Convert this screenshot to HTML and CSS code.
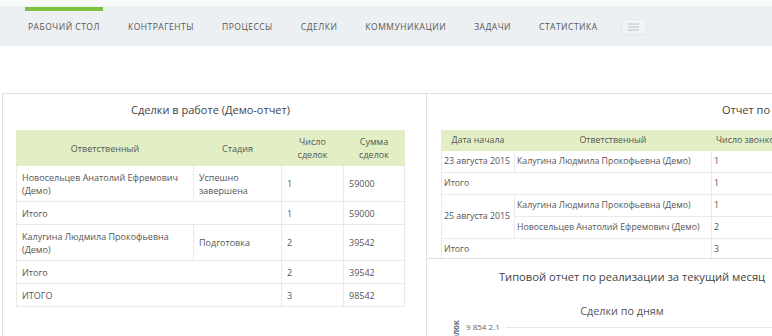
FILE: index.html
```html
<!DOCTYPE html>
<html lang="ru">
<head>
    <meta charset="UTF-8">
    <title>Рабочий стол</title>
    <link rel="stylesheet" href="styles.css">
</head>
<body>

<div class="topline"></div>
<nav class="nav">
    <a href="#" class="nav-item active">Рабочий стол</a>
    <a href="#" class="nav-item">Контрагенты</a>
    <a href="#" class="nav-item">Процессы</a>
    <a href="#" class="nav-item">Сделки</a>
    <a href="#" class="nav-item">Коммуникации</a>
    <a href="#" class="nav-item">Задачи</a>
    <a href="#" class="nav-item">Статистика</a>
    <button class="nav-more">
        <svg width="11" height="8" viewBox="0 0 11 8"><path d="M0 1h11M0 4h11M0 7h11" stroke="#b7bfc6" stroke-width="1.2"/></svg>
    </button>
</nav>

<div class="board">
    <section class="panel panel-deals">
        <h3 class="panel-title">Сделки в работе (Демо-отчет)</h3>
        <table class="report">
            <colgroup>
                <col style="width:177px"><col style="width:88px"><col style="width:62px"><col>
            </colgroup>
            <tr>
                <th>Ответственный</th>
                <th>Стадия</th>
                <th>Число<br>сделок</th>
                <th>Сумма<br>сделок</th>
            </tr>
            <tr class="tall">
                <td>Новосельцев Анатолий Ефремович (Демо)</td>
                <td>Успешно завершена</td>
                <td>1</td>
                <td>59000</td>
            </tr>
            <tr>
                <td colspan="2">Итого</td>
                <td>1</td>
                <td>59000</td>
            </tr>
            <tr class="tall">
                <td>Калугина Людмила Прокофьевна (Демо)</td>
                <td>Подготовка</td>
                <td>2</td>
                <td>39542</td>
            </tr>
            <tr>
                <td colspan="2">Итого</td>
                <td>2</td>
                <td>39542</td>
            </tr>
            <tr>
                <td colspan="2">ИТОГО</td>
                <td>3</td>
                <td>98542</td>
            </tr>
        </table>
    </section>

    <div class="side">
        <section class="panel panel-calls">
            <h3 class="panel-title">Отчет по звонкам (Демо-отчет)</h3>
            <table class="report compact">
                <colgroup>
                    <col style="width:73px"><col style="width:197px"><col style="width:90px">
                </colgroup>
                <tr>
                    <th>Дата начала</th>
                    <th>Ответственный</th>
                    <th class="left">Число звонков</th>
                </tr>
                <tr>
                    <td>23 августа 2015</td>
                    <td>Калугина Людмила Прокофьевна (Демо)</td>
                    <td>1</td>
                </tr>
                <tr>
                    <td colspan="2">Итого</td>
                    <td>1</td>
                </tr>
                <tr>
                    <td rowspan="2">25 августа 2015</td>
                    <td>Калугина Людмила Прокофьевна (Демо)</td>
                    <td>1</td>
                </tr>
                <tr>
                    <td>Новосельцев Анатолий Ефремович (Демо)</td>
                    <td>2</td>
                </tr>
                <tr>
                    <td colspan="2">Итого</td>
                    <td>3</td>
                </tr>
            </table>
        </section>

        <section class="panel panel-sales">
            <h3 class="panel-title">Типовой отчет по реализации за текущий месяц</h3>
            <div class="chart">
                <div class="chart-title">Сделки по дням</div>
                <div class="chart-axis">
                    <span class="axis-name">Сумма сделок</span>
                    <span class="axis-value">9 854 2.1</span>
                    <span class="axis-line"></span>
                </div>
            </div>
        </section>
    </div>
</div>

</body>
</html>
```

FILE: styles.css
```css
html, body {
    margin: 0;
    height: 100%;
    overflow: hidden;
}
body {
    font-family: "Open Sans", Arial, sans-serif;
    background: #fff;
    color: #555;
}
.topline {
    height: 6px;
    background: #f8f9f9;
}
.nav {
    height: 40px;
    background: #edf0f2;
    display: flex;
    align-items: center;
    gap: 22px;
    padding-left: 25px;
}
.nav-item {
    position: relative;
    padding: 0 3px;
    height: 40px;
    line-height: 42px;
    font-size: 8.5px;
    letter-spacing: 0.5px;
    text-transform: uppercase;
    color: #555;
    text-decoration: none;
}
.nav-item.active::before {
    content: "";
    position: absolute;
    top: 1px;
    left: 0;
    right: 0;
    height: 4px;
    background: #7fc241;
}
.nav-more {
    width: 26px;
    height: 16px;
    margin-left: -2px;
    margin-top: 2px;
    padding: 0;
    border: 1px solid #e6e9eb;
    border-radius: 3px;
    background: #f1f3f4;
    display: flex;
    align-items: center;
    justify-content: center;
}
.board {
    margin-top: 47px;
    display: grid;
    grid-template-columns: 425px 1fr;
    margin-left: 2px;
}
.panel {
    border: 1px solid #e0e0e0;
    background: #fff;
    overflow: hidden;
}
.panel-title {
    margin: 0;
    font-weight: normal;
    font-size: 11px;
    color: #444;
    text-align: center;
    line-height: 16px;
    padding: 8px 0 12px;
}
.panel-deals {
    height: 400px;
    padding: 0 21px 0 13px;
}
.side {
    display: flex;
    flex-direction: column;
    width: 758px;
}
.panel-calls {
    height: 164px;
    padding: 0 14px;
    border-left: none;
}
.panel-sales {
    width: 410px;
    height: 200px;
    border-top: 1px solid #e0e0e0;
    margin-top: -1px;
    border-left: none;
}
.panel-sales .panel-title {
    padding-top: 10px;
    font-size: 11.2px;
}
.report {
    border-collapse: collapse;
    table-layout: fixed;
    width: 389px;
    font-size: 9px;
    color: #555;
}
.report th {
    background: #e2efc5;
    font-weight: normal;
    text-align: center;
    line-height: 13px;
    height: 34px;
    padding: 0 4px;
    border: 1px solid #e2efc5;
}
.report td {
    border: 1px solid #eaeaea;
    padding: 0 5px;
    height: 22px;
    line-height: 13px;
}
.report tr.tall td {
    height: 35px;
}
.compact {
    width: 360px;
    font-size: 8.8px;
}
.compact th {
    height: 19px;
    padding: 0 4px;
}
.compact th.left {
    text-align: left;
}
.compact td {
    height: 21px;
    padding: 0 1px 0 2px;
    white-space: nowrap;
}
.chart-title {
    text-align: center;
    font-size: 10.8px;
    color: #555;
    margin-top: 6px;
    padding-right: 20px;
}
.chart-axis {
    display: flex;
    align-items: flex-start;
    gap: 6px;
    margin-top: 2px;
    padding-left: 24px;
}
.axis-name {
    writing-mode: vertical-rl;
    transform: rotate(180deg);
    white-space: nowrap;
    font-size: 8px;
    font-weight: bold;
    color: #607080;
    line-height: 9px;
}
.axis-value {
    font-size: 8px;
    color: #666;
    margin-top: 1px;
}
.axis-line {
    flex: 1;
    height: 1px;
    margin-top: 7px;
    background: #e6e6e6;
}
```
